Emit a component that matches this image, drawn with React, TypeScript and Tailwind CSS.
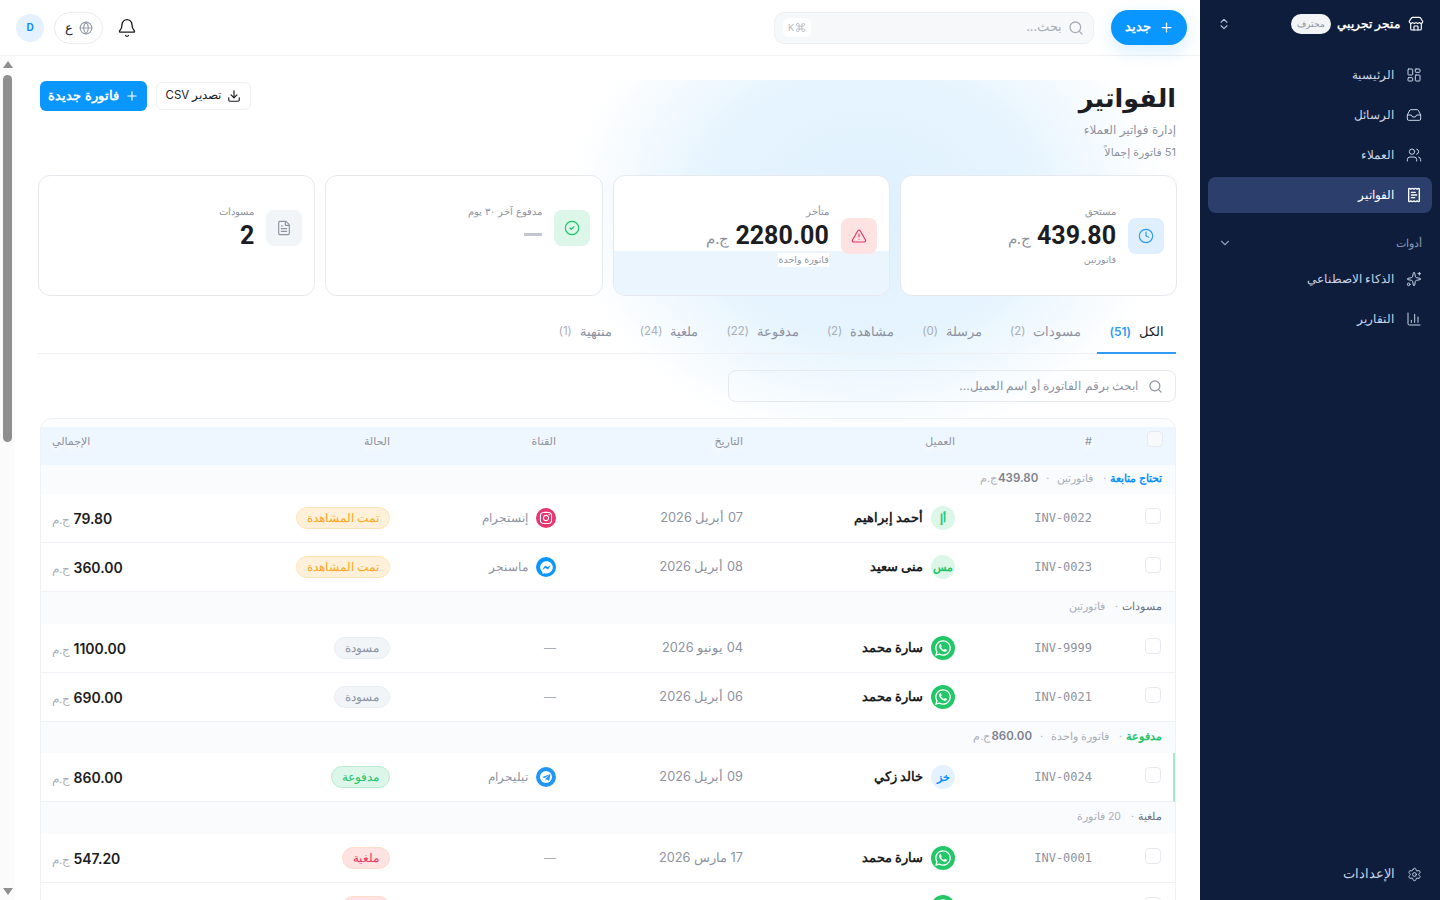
import React, { useState } from "react";
import {
  Bell,
  ChartColumn,
  ChevronDown,
  ChevronsUpDown,
  CircleCheck,
  Clock,
  Command,
  Download,
  FileText,
  Globe,
  Inbox,
  LayoutDashboard,
  Plus,
  ReceiptText,
  Search,
  Settings,
  Sparkles,
  Store,
  TriangleAlert,
  Users,
} from "lucide-react";
import { FaFacebookMessenger, FaInstagram, FaTelegramPlane, FaWhatsapp } from "react-icons/fa";

const gridCols = "grid grid-cols-[70px_137px_212px_187px_166px_238px_100px]";
const dejavu = "font-['Inter','DejaVu_Sans',sans-serif]";

const navMain = [
  { label: "الرئيسية", icon: LayoutDashboard },
  { label: "الرسائل", icon: Inbox },
  { label: "العملاء", icon: Users },
  { label: "الفواتير", icon: ReceiptText, active: true },
];

const navTools = [
  { label: "الذكاء الاصطناعي", icon: Sparkles },
  { label: "التقارير", icon: ChartColumn },
];

const tabs = [
  { label: "الكل", count: "51", active: true },
  { label: "مسودات", count: "2" },
  { label: "مرسلة", count: "0" },
  { label: "مشاهدة", count: "2" },
  { label: "مدفوعة", count: "22" },
  { label: "ملغية", count: "24" },
  { label: "منتهية", count: "1" },
];

type Channel = "instagram" | "messenger" | "telegram" | "none";
type Status = "seen" | "draft" | "paid" | "void";

interface Row {
  id: string;
  name: string;
  avatar: string;
  avatarStyle: string;
  date: string;
  channel: Channel;
  status: Status;
  total: string;
  accent?: boolean;
}

const statusStyles: Record<Status, { label: string; cls: string }> = {
  seen: { label: "تمت المشاهدة", cls: "bg-[#fff1d9] text-[#f9a825] border-[#fde4b8]" },
  draft: { label: "مسودة", cls: "bg-[#f2f5f8] text-[#8e93a0] border-[#e9edf2]" },
  paid: { label: "مدفوعة", cls: "bg-[#dcf6ea] text-[#1fc46a] border-[#b9ecd6]" },
  void: { label: "ملغية", cls: "bg-[#ffe3e3] text-[#ec3560] border-[#ffdccb]" },
};

const channelLabels: Record<Channel, string> = {
  instagram: "إنستجرام",
  messenger: "ماسنجر",
  telegram: "تيليجرام",
  none: "",
};

const green = "bg-[#dcf6ea] text-[#1fc46a]";
const blue = "bg-[#e3f2fe] text-[#0a8fff]";

const sara = (id: string, date: string, status: Status, total: string): Row => ({
  id,
  name: "سارة محمد",
  avatar: "wa",
  avatarStyle: "",
  date,
  channel: "none",
  status,
  total,
});

const voidRows: Row[] = Array.from({ length: 19 }, (_, i) =>
  sara(`INV-00${String(i + 2).padStart(2, "0")}`, "17 مارس 2026", "void", "547.20"),
);

const groups: { head: React.ReactNode; rows: Row[] }[] = [
  {
    head: <GroupHead title="تحتاج متابعة" color="text-[#0a8fff] font-semibold" count="فاتورتين" total="439.80" />,
    rows: [
      { id: "INV-0022", name: "أحمد إبراهيم", avatar: "أإ", avatarStyle: green, date: "07 أبريل 2026", channel: "instagram", status: "seen", total: "79.80" },
      { id: "INV-0023", name: "منى سعيد", avatar: "مس", avatarStyle: green, date: "08 أبريل 2026", channel: "messenger", status: "seen", total: "360.00" },
    ],
  },
  {
    head: <GroupHead title="مسودات" color="text-[#6b7280] font-medium" count="فاتورتين" />,
    rows: [sara("INV-9999", "04 يونيو 2026", "draft", "1100.00"), sara("INV-0021", "06 أبريل 2026", "draft", "690.00")],
  },
  {
    head: <GroupHead title="مدفوعة" color="text-[#1fc46a] font-semibold" count="فاتورة واحدة" total="860.00" />,
    rows: [{ id: "INV-0024", name: "خالد زكي", avatar: "خز", avatarStyle: blue, date: "09 أبريل 2026", channel: "telegram", status: "paid", total: "860.00", accent: true }],
  },
  {
    head: <GroupHead title="ملغية" color="text-[#6b7280] font-medium" count="20 فاتورة" />,
    rows: [sara("INV-0001", "17 مارس 2026", "void", "547.20"), ...voidRows],
  },
];

function GroupHead({ title, color, count, total }: { title: string; color: string; count: string; total?: string }) {
  return (
    <div className="h-full flex items-center pr-[13px] pb-[2px] bg-[#fafbfc] text-[10.5px]">
      <span className={color}>{title}</span>
      <span className="text-[#a9aeb8] mr-[4px]">·</span>
      <span className="text-[#a9aeb8] mr-[10px]">{count}</span>
      {total && (
        <>
          <span className="text-[#a9aeb8] mx-[8px]">·</span>
          <span className="text-[#7d828e] text-[11.5px] font-semibold">{total}</span>
          <span className="text-[#a9aeb8] mr-px">ج.م</span>
        </>
      )}
    </div>
  );
}

function ChannelCell({ channel }: { channel: Channel }) {
  if (channel === "none") return <span className="text-[#a9aeb8] text-[12px]">—</span>;
  return (
    <div className="flex items-center gap-2 text-[12.25px] text-[#8e93a0]">
      {channel === "instagram" && (
        <span className="w-5 h-5 rounded-full bg-[#e6356f] text-white flex items-center justify-center">
          <FaInstagram size={14} />
        </span>
      )}
      {channel === "messenger" && (
        <span className="w-5 h-5 rounded-full bg-[#0a96ff] text-white flex items-center justify-center">
          <FaFacebookMessenger size={13} />
        </span>
      )}
      {channel === "telegram" && (
        <span className="w-5 h-5 rounded-full bg-[#2196f3] flex items-center justify-center">
          <span className="w-3 h-3 rounded-full bg-white text-[#2196f3] flex items-center justify-center">
            <FaTelegramPlane size={9} />
          </span>
        </span>
      )}
      <span>{channelLabels[channel]}</span>
    </div>
  );
}

function InvoiceRow({ row }: { row: Row }) {
  const status = statusStyles[row.status];
  return (
    <div className={`${gridCols} items-center h-[49px] border-b border-[#eef1f5] bg-white ${row.accent ? "pr-[11px] border-r-2 border-r-[#a6e9c6]" : "pr-[13px]"}`}>
      <span className="w-4 h-4 rounded-[4px] border border-[#e6eaf0] bg-white mb-1 mr-px" />
      <span dir="ltr" className="text-right font-['DejaVu_Sans_Mono',monospace] text-[12px] text-[#8e93a0]">
        {row.id}
      </span>
      <div className="flex items-center gap-2">
        {row.avatar === "wa" ? (
          <span className="w-6 h-6 rounded-full bg-[#22c768] text-white flex items-center justify-center">
            <FaWhatsapp size={18} />
          </span>
        ) : (
          <span className={`w-6 h-6 rounded-full flex items-center justify-center text-[11px] font-semibold ${row.avatarStyle}`}>
            {row.avatar}
          </span>
        )}
        <span className="text-[13px] font-semibold text-[#1c1d22]">{row.name}</span>
      </div>
      <span className="text-[12.75px] text-[#8e93a0]">{row.date}</span>
      <ChannelCell channel={row.channel} />
      <div className="flex">
        <span className={`flex items-center h-[22px] px-[10px] rounded-full border text-[12px] ${status.cls}`}>{status.label}</span>
      </div>
      <div className="flex items-baseline gap-[3px] justify-end">
        <span className="text-[14px] font-semibold text-[#1c1d22]">{row.total}</span>
        <span className="text-[12px] text-[#a9aeb8]">ج.م</span>
      </div>
    </div>
  );
}

function StatCard({
  icon: Icon,
  iconCls,
  label,
  value,
  muted,
  sub,
  tinted,
}: {
  icon: React.ElementType;
  iconCls: string;
  label: string;
  value?: string;
  muted?: string;
  sub?: string;
  tinted?: boolean;
}) {
  return (
    <div className="relative h-[121px] rounded-xl border border-[#e6e9ee] bg-white overflow-hidden pt-[29px] pr-3">
      {tinted && <div className="absolute inset-x-0 bottom-0 h-[44px] bg-[#eaf5fe]" />}
      <div className="relative flex items-center gap-3">
        <span className={`w-9 h-9 rounded-lg flex items-center justify-center ${iconCls} ${sub ? "" : "-mt-[3px]"}`}>
          <Icon size={16} strokeWidth={1.75} />
        </span>
        <div>
          <div className="text-[10px] leading-[13px] text-[#8e93a0]">{label}</div>
          <div className="flex items-baseline gap-1.5 h-[35px] leading-[35px]">
            {value ? (
              <>
                <span className="font-['Roboto',sans-serif] text-[25px] font-bold text-[#1c1d22]">{value}</span>
                {muted && <span className="text-[14.5px] text-[#8e93a0]">{muted}</span>}
              </>
            ) : (
              <span className="block w-[18px] h-[3px] bg-[#c2c6ce] mt-[15px]" />
            )}
          </div>
          {sub && <div className={`${dejavu} text-[9.5px] leading-[14px] text-[#8e93a0] w-fit ${tinted ? "bg-white" : ""}`}>{sub}</div>}
        </div>
      </div>
    </div>
  );
}

function Sidebar() {
  const itemCls = "flex items-center gap-3 h-9 px-[10px] rounded-lg";
  return (
    <aside className="w-[240px] shrink-0 h-full bg-[#0f1d3d] flex flex-col px-2">
      <div className="flex items-center h-[48px] pr-2 pl-[9px] text-white">
        <Store size={16} strokeWidth={1.75} />
        <span className="mr-2 text-[12px] font-bold">متجر تجريبي</span>
        <span className="mr-[6px] w-10 h-5 inline-flex items-center justify-center rounded-full bg-[#f3f4f6] text-[#8e93a0] text-[8.5px]">محترف</span>
        <ChevronsUpDown size={14} className="mr-auto text-[#b7c2d6]" />
      </div>
      <nav className="mt-[9px] flex flex-col gap-1">
        {navMain.map((item) => (
          <div key={item.label} className={`${itemCls} text-[12px] ${item.active ? "bg-[#2c3e6b] text-white" : "text-[#c8d4e6]"}`}>
            <item.icon size={16} strokeWidth={item.active ? 2 : 1.5} />
            <span>{item.label}</span>
          </div>
        ))}
      </nav>
      <div className="flex items-center h-8 mt-[14px] px-[10px] text-[11px] text-[#8b99b4]">
        <span>أدوات</span>
        <ChevronDown size={14} className="mr-auto" />
      </div>
      <div className="mt-[2px] flex flex-col gap-1">
        {navTools.map((item) => (
          <div key={item.label} className={`${itemCls} text-[12px] text-[#c8d4e6]`}>
            <item.icon size={16} strokeWidth={1.5} />
            <span>{item.label}</span>
          </div>
        ))}
      </div>
      <div className={`${itemCls} mt-auto mb-2 text-[#c8d4e6] text-[13px]`}>
        <Settings size={15} strokeWidth={1.5} />
        <span>الإعدادات</span>
      </div>
    </aside>
  );
}

function TopBar() {
  return (
    <header className="h-14 shrink-0 flex items-center border-b border-[#f0f1f3] bg-white pr-[13px] pl-4">
      <button className="h-[35px] w-[76px] rounded-full bg-[#0a96ff] text-white text-[12.5px] font-semibold flex items-center justify-center gap-2 shadow-[0_6px_18px_rgba(10,150,255,0.16)]">
        <Plus size={15} />
        جديد
      </button>
      <div className="mr-[17px] w-[320px] h-8 rounded-[10px] bg-[#f6f8fa] border border-[#eceff3] flex items-center pr-[9px] pl-2 text-[#a9aeb8]">
        <Search size={16} />
        <span className="mr-[6px] text-[12.5px]">بحث...</span>
        <span className="mr-auto h-[19px] w-[28px] bg-white rounded-md flex items-center justify-center gap-px text-[9px] text-[#b5b9c2]">
          <Command size={11} />K
        </span>
      </div>
      <Bell size={20} strokeWidth={1.6} className="mr-auto text-[#1c1d22]" />
      <div className="mr-[14px] h-8 w-[49px] rounded-full border border-[#e9ecf0] flex items-center justify-center gap-1.5 text-[13px] text-[#1c1d22]">
        <Globe size={14} className="text-[#9aa0ab]" />
        <span>ع</span>
      </div>
      <span className="mr-[10px] w-7 h-7 rounded-full bg-[#e3f2fe] text-[#0a8fff] text-[10px] font-bold flex items-center justify-center">D</span>
    </header>
  );
}

// the browser hides native scrollbars here, so the track is drawn by hand
function ScrollTrack({ offset }: { offset: number }) {
  return (
    <div className="w-[15px] shrink-0 bg-[#fbfbfb] flex flex-col items-center pt-[5px] pb-[5px]">
      <svg width="10" height="7" viewBox="0 0 10 7" className="shrink-0">
        <path d="M5 0L10 7H0Z" fill="#8f8f8f" />
      </svg>
      <div className="w-[9px] h-[367px] mt-[7px] shrink-0 rounded-[5px] bg-[#8f8f8f]" style={{ transform: `translateY(${offset}px)` }} />
      <svg width="10" height="7" viewBox="0 0 10 7" className="shrink-0 mt-auto">
        <path d="M0 0H10L5 7Z" fill="#8f8f8f" />
      </svg>
    </div>
  );
}

export default function App() {
  const [offset, setOffset] = useState(0);

  const handleScroll = (e: React.UIEvent<HTMLElement>) => {
    const el = e.currentTarget;
    const range = el.scrollHeight - el.clientHeight;
    setOffset(range > 0 ? (el.scrollTop / range) * 440 : 0);
  };

  return (
    <div dir="rtl" className="h-screen w-full flex font-['Inter','Noto_Sans',sans-serif] bg-white overflow-hidden">
      <Sidebar />
      <div className="flex-1 min-w-0 flex flex-col">
        <TopBar />
        <div className="flex-1 min-h-0 flex">
          <main onScroll={handleScroll} className="flex-1 min-w-0 overflow-y-auto relative">
            <div className="relative px-6 pt-6 pb-6">
              <div className="absolute top-6 right-0 left-0 h-[420px] bg-[radial-gradient(ellipse_300px_240px_at_72%_30%,#dff1fe_0%,#e6f4fe_55%,rgba(255,255,255,0)_100%)]" />
              <div className="relative">
                <div className="flex items-start justify-between">
                  <div>
                    <h1 className={`${dejavu} text-[25.5px] leading-[36px] font-bold text-[#1c1d22]`}>الفواتير</h1>
                    <p className={`${dejavu} mt-[4px] text-[12px] leading-5 text-[#8e93a0]`}>إدارة فواتير العملاء</p>
                    <p className={`${dejavu} mt-[4px] -mb-px text-[11px] leading-4 text-[#8e93a0]`}>51 فاتورة إجمالاً</p>
                  </div>
                  <div className="flex items-center gap-[9px] mt-px ml-px">
                    <button className="h-7 w-[95px] rounded-md border border-[#eef0f3] bg-white text-[11.5px] text-[#1c1d22] flex items-center justify-center gap-1.5">
                      <Download size={14} />
                      تصدير CSV
                    </button>
                    <button className="h-[30px] w-[107px] rounded-md bg-[#0a96ff] text-white text-[12.75px] font-semibold flex items-center justify-center gap-1.5">
                      <Plus size={14} />
                      فاتورة جديدة
                    </button>
                  </div>
                </div>

                <div className="-mx-px mt-4 grid grid-cols-4 gap-[10px]">
                  <StatCard icon={Clock} iconCls="bg-[#e0effe] text-[#2f9bf4]" label="مستحق" value="439.80" muted="ج.م" sub="فاتورتين" />
                  <StatCard icon={TriangleAlert} iconCls="bg-[#ffe3e3] text-[#ec3560]" label="متأخر" value="2280.00" muted="ج.م" sub="فاتورة واحدة" tinted />
                  <StatCard icon={CircleCheck} iconCls="bg-[#dcf6ea] text-[#1fc46a]" label="مدفوع آخر ٣٠ يوم" />
                  <StatCard icon={FileText} iconCls="bg-[#f2f5f8] text-[#8e93a0]" label="مسودات" value="2" />
                </div>

                <div className="mt-[18px] -ml-px flex items-center gap-[4px] border-b border-[#eef0f3] h-10">
                  {tabs.map((tab) => (
                    <div
                      key={tab.label}
                      className={`h-10 px-3 pb-[2px] -mb-px flex items-center gap-2 text-[13px] border-b-2 ${tab.active ? "border-[#2f9bf4] text-[#1c1d22]" : "border-transparent text-[#8e93a0]"}`}
                    >
                      <span>{tab.label}</span>
                      <span className={tab.active ? "text-[12px] text-[#2f9bf4] font-semibold" : "text-[11.5px] text-[#a9aeb8]"}>({tab.count})</span>
                    </div>
                  ))}
                </div>

                <div className="mt-[16px] w-[448px] h-8 rounded-lg border border-[#e6eaef] flex items-center pr-[12px] gap-[10px] text-[12.25px] text-[#8e93a0]">
                  <Search size={15} />
                  <span>ابحث برقم الفاتورة أو اسم العميل...</span>
                </div>

                <div className="mt-[16px] ml-px rounded-t-xl border border-[#eef1f5] overflow-hidden bg-[#fcfdfe] pt-2">
                  <div className={`${gridCols} items-start pt-[6px] h-[38px] pr-[13px] bg-[#eef7ff] text-[11px] text-[#8e93a0] [text-shadow:0_2px_6px_#fff,0_4px_6px_#fff] ${dejavu}`}>
                    <span className="w-4 h-4 rounded-[4px] border border-[#e6eaf0] bg-[#f7f9fb] -mt-[2px] -mr-px" />
                    <span className="text-right">#</span>
                    <span>العميل</span>
                    <span>التاريخ</span>
                    <span>القناة</span>
                    <span>الحالة</span>
                    <span className="text-left">الإجمالي</span>
                  </div>
                  {groups.map((group, i) => (
                    <div key={i}>
                      <div className={i === 2 ? "h-[31px]" : i === 0 ? "h-[29px]" : "h-[32px]"}>{group.head}</div>
                      {group.rows.map((row) => (
                        <InvoiceRow key={row.id} row={row} />
                      ))}
                    </div>
                  ))}
                </div>
              </div>
            </div>
          </main>
          <ScrollTrack offset={offset} />
        </div>
      </div>
    </div>
  );
}
